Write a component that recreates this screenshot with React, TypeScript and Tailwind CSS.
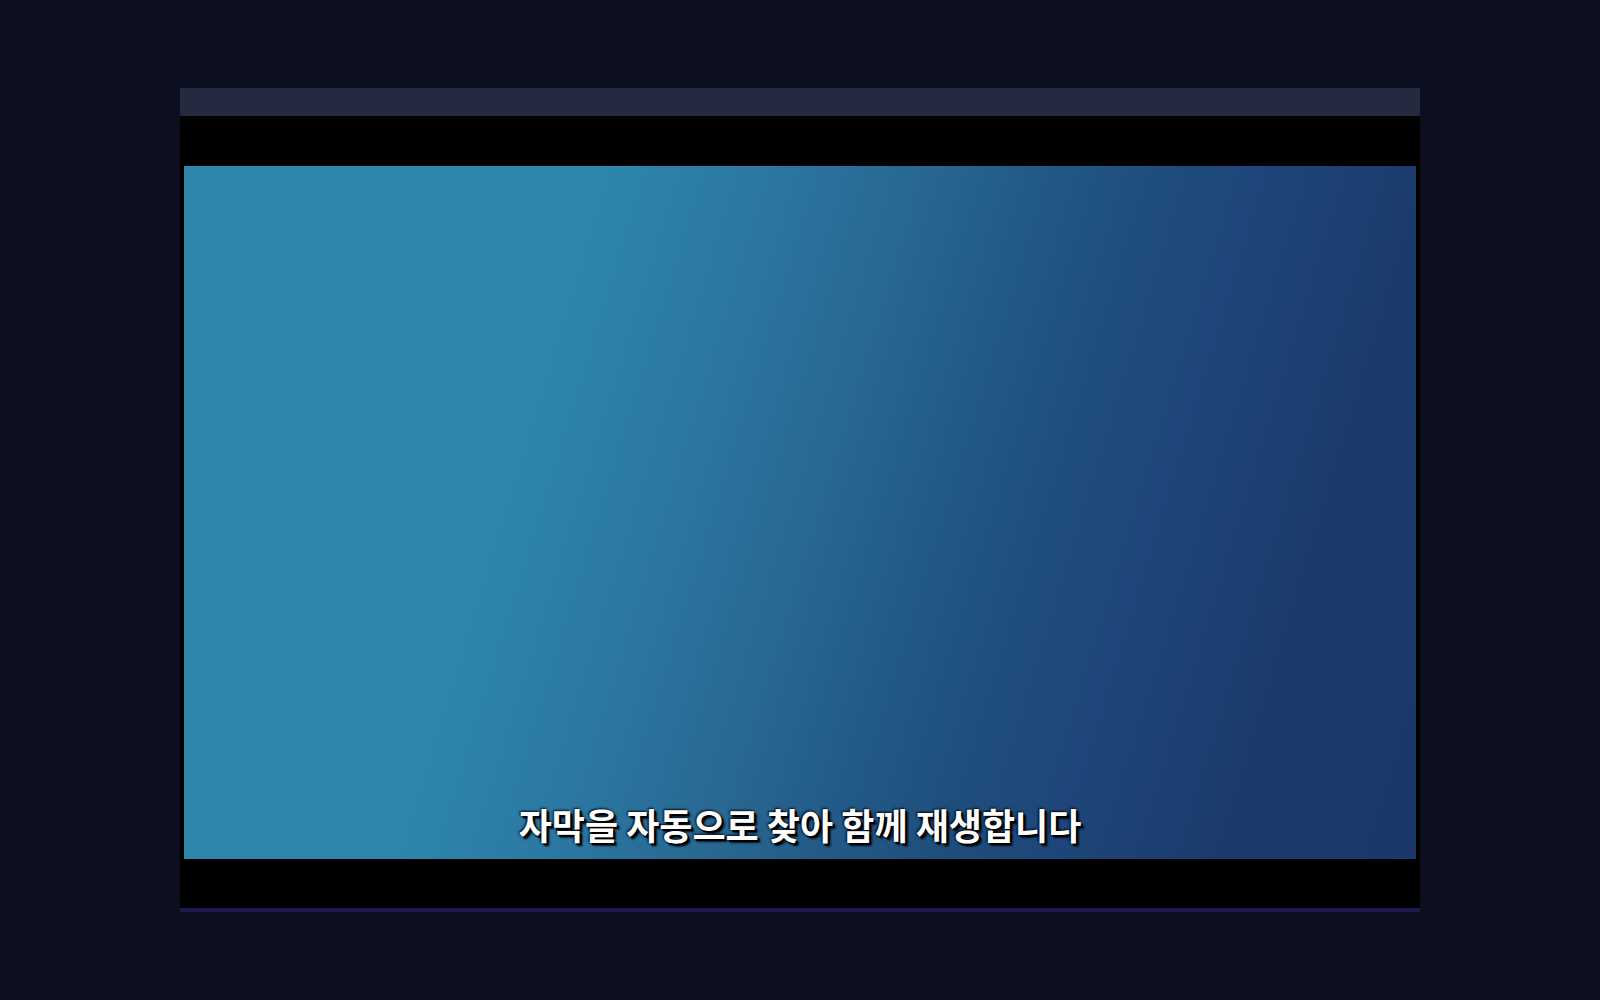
export default function App() {
  return (
    <div className="min-h-screen w-full bg-[#0c0f1f] flex items-center justify-center">
      <div className="w-[1240px] flex flex-col border-b-4 border-[#1f1b4e]">
        {/* Title bar */}
        <div className="h-7 bg-[#252a40]" />

        {/* Player area */}
        <div className="h-[792px] bg-black px-1 flex items-center">
          <div className="relative w-full aspect-video overflow-hidden bg-[linear-gradient(107deg,#2e87ab_0%,#2e87ab_28%,#2b78a3_40%,#27668f_52%,#225886_60%,#1f4f7d_66%,#1e467a_74%,#1b3b6c_86%,#1b376a_100%)]">
            {/* Subtitle overlay */}
            <div className="absolute inset-x-0 bottom-3 flex justify-center">
              <p className="font-['Noto_Sans_CJK_KR','Noto_Sans',sans-serif] text-[36px] font-bold leading-[1.2] text-white [text-shadow:2px_2px_0_#000,3px_3px_2px_rgba(0,0,0,0.8),0_0_3px_#000,-1px_-1px_2px_rgba(0,0,0,0.6)]">
                자막을 자동으로 찾아 함께 재생합니다
              </p>
            </div>
          </div>
        </div>
      </div>
    </div>
  );
}
